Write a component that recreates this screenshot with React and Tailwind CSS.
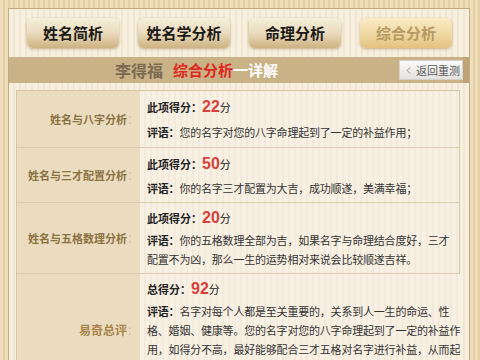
import { ChevronLeft } from "lucide-react";

const tabs = [
  { name: "姓名简析" },
  { name: "姓名学分析" },
  { name: "命理分析" },
  { name: "综合分析", active: true },
];

const rows = [
  {
    label: "姓名与八字分析",
    scoreLabel: "此项得分",
    score: 22,
    lines: ["您的名字对您的八字命理起到了一定的补益作用；"],
    height: "h-[56px] justify-between py-[5px]",
  },
  {
    label: "姓名与三才配置分析",
    scoreLabel: "此项得分",
    score: 50,
    lines: ["你的名字三才配置为大吉，成功顺遂，美满幸福；"],
    height: "h-[54px] justify-between pt-[5px] pb-[4px]",
  },
  {
    label: "姓名与五格数理分析",
    scoreLabel: "此项得分",
    score: 20,
    lines: [
      "你的五格数理全部为吉，如果名字与命理结合度好，三才",
      "配置不为凶，那么一生的运势相对来说会比较顺遂吉祥。",
    ],
    height: "py-[4px]",
  },
  {
    label: "易奇总评",
    scoreLabel: "总得分",
    score: 92,
    lines: [
      "名字对每个人都是至关重要的，关系到人一生的命运、性",
      "格、婚姻、健康等。您的名字对您的八字命理起到了一定的补益作",
      "用，如得分不高，最好能够配合三才五格对名字进行补益，从而起",
      "到更好的作用。",
    ],
    height: "pt-[4px] pb-[8px]",
    total: true,
  },
];

function Tab({ name, active }) {
  return (
    <div
      className={`flex h-[30px] w-[92px] items-center justify-center rounded-[6px] text-[15px] font-bold shadow-[0_1px_3px_rgba(130,95,40,0.45)] ${
        active
          ? "bg-linear-to-b from-[#f9ebc6] via-[#f1d9a4] to-[#e3c282] text-[#b59b63]"
          : "bg-linear-to-b from-[#f6eedc] via-[#eadbbd] to-[#cdb283] text-[#1c1a16]"
      }`}
    >
      {name}
    </div>
  );
}

function Row({ row, first }) {
  return (
    <div className={`flex ${first ? "" : "border-t border-[#dccdae]"}`}>
      <div className="flex w-[123px] shrink-0 items-center justify-end bg-[#ecdcbf] pr-[2px]">
        <span
          className={`font-bold ${
            row.total ? "text-[12px] text-[#a5844c]" : "text-[11px] text-[#8a7343]"
          }`}
        >
          {row.label}
        </span>
        <span className="text-[11px] text-[#cbbfa8]">：</span>
      </div>
      <div
        className={`flex flex-1 flex-col bg-[repeating-linear-gradient(90deg,#f8f1e3_0px,#f8f1e3_4px,#f3eadb_4px,#f3eadb_6px)] pl-[7px] pr-[2px] ${row.height}`}
      >
        <div className="flex h-[22px] items-center text-[11px] text-[#222]">
          <span className="font-bold">{row.scoreLabel}：</span>
          <span className="font-['Liberation_Sans',sans-serif] text-[16px] font-bold text-[#d8403a]">
            {row.score}
          </span>
          <span>分</span>
        </div>
        <div className="mt-[2px] text-[11px] leading-[19px] tracking-[-0.2px] text-[#333]">
          {row.lines.map((line, i) => (
            <div key={i} className="whitespace-nowrap">
              {i === 0 ? <span className="font-bold text-[#222]">评语：</span> : null}
              {line}
            </div>
          ))}
        </div>
      </div>
    </div>
  );
}

export default function App() {
  return (
    <div className="h-[360px] w-[480px] overflow-hidden bg-[repeating-linear-gradient(90deg,#efdebb_0px,#efdebb_3px,#e5d0a6_3px,#e5d0a6_5px)] pl-[8px] pr-[10px] pt-[8px] font-['Noto_Sans_CJK_SC','Noto_Sans',sans-serif]">
      <div className="h-full border-x border-t border-[#c4ab7e] bg-[repeating-linear-gradient(90deg,#f7efdf_0px,#f7efdf_4px,#f1e6d0_4px,#f1e6d0_6px)]">
        <div className="flex h-[48px] items-center gap-[19px] pl-[18px]">
          {tabs.map((t) => (
            <Tab key={t.name} {...t} />
          ))}
        </div>

        <div className="flex h-[26px] items-center border-r-[6px] border-[#bea476] bg-[#c9b286]">
          <div className="flex items-center pl-[106px] font-bold">
            <span className="text-[16px] text-[#7a6b52]">李得福</span>
            <span className="ml-[10px] text-[15px] text-[#e0261f]">综合分析</span>
            <span className="text-[15px] text-white">一详解</span>
          </div>
          <button className="ml-auto flex h-[20px] w-[64px] items-center gap-[2px] whitespace-nowrap border border-[#d5d2cc] bg-linear-to-b from-[#fbfbfb] to-[#e4e2de] pl-[3px] text-[11px] leading-none text-[#5a5a5a]">
            <ChevronLeft size={11} strokeWidth={1.5} className="shrink-0" />
            返回重测
          </button>
        </div>

        <div className="ml-[7px] mr-[9px] mt-[7px] border border-[#d6c5a2]">
          {rows.map((row, i) => (
            <Row key={row.label} row={row} first={i === 0} />
          ))}
        </div>
      </div>
    </div>
  );
}
